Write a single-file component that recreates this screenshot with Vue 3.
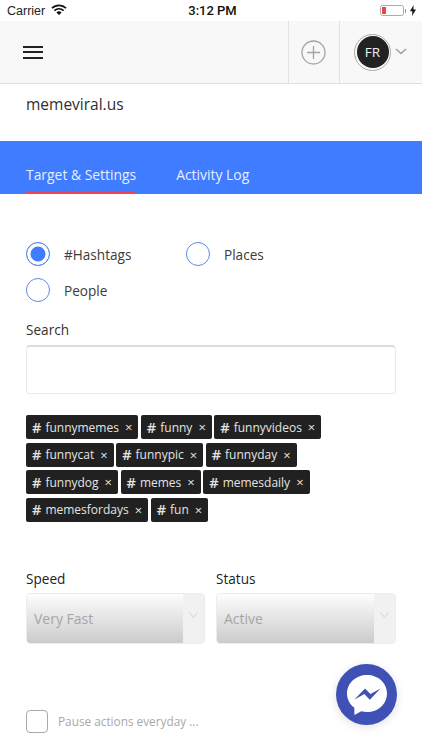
<script setup>
const tagRows = [
  ['funnymemes', 'funny', 'funnyvideos'],
  ['funnycat', 'funnypic', 'funnyday'],
  ['funnydog', 'memes', 'memesdaily'],
  ['memesfordays', 'fun'],
]
</script>

<template>
  <div class="page">
    <!-- status bar -->
    <div class="status">
      <div class="status-left">
        <span>Carrier</span>
        <svg width="16" height="12" viewBox="0 0 16 12" class="wifi">
          <path d="M1 4.2a10 10 0 0 1 14 0" fill="none" stroke="#111" stroke-width="1.7" />
          <path d="M3.4 6.6a6.6 6.6 0 0 1 9.2 0" fill="none" stroke="#111" stroke-width="1.7" />
          <path d="M5.4 8.4a3.8 3.8 0 0 1 5.2 0L8 11z" fill="#111" />
        </svg>
      </div>
      <span class="clock">3:12 PM</span>
      <div class="status-right">
        <div class="battery"><div class="battery-fill" /></div>
        <div class="battery-nub" />
        <svg width="6" height="11" viewBox="0 0 6 11" class="bolt">
          <path d="M3.6 0 0 6.2h2.4L2 11l4-6.6H3.4z" fill="#111" />
        </svg>
      </div>
    </div>

    <!-- header -->
    <header class="topbar">
      <button class="burger" aria-label="Menu"><span /><span /><span /></button>
      <div class="cell cell-add">
        <svg width="25" height="25" viewBox="0 0 25 25">
          <circle cx="12.500" cy="12.500" r="11.500" fill="none" stroke="#a3a3a3" stroke-width="1.3" />
          <path d="M12.500 6v13M6 12.500h13" fill="none" stroke="#a3a3a3" stroke-width="1.3" />
        </svg>
      </div>
      <div class="cell cell-user">
        <div class="avatar"><span>FR</span></div>
        <svg width="12" height="7" viewBox="0 0 12 7" class="caret">
          <path d="M1 1l5 4.600L11 1" fill="none" stroke="#9b9b9b" stroke-width="1.4" />
        </svg>
      </div>
    </header>

    <div class="account">memeviral.us</div>

    <!-- tabs -->
    <nav class="tabs">
      <span class="tab active">Target &amp; Settings</span>
      <span class="tab">Activity Log</span>
    </nav>

    <main class="content">
      <div class="radios">
        <label class="radio"><i class="dot on" />#Hashtags</label>
        <label class="radio"><i class="dot" />Places</label>
        <label class="radio"><i class="dot" />People</label>
      </div>

      <div class="field-label search-label">Search</div>
      <div class="search-box" />

      <div class="chips">
        <div v-for="(row, i) in tagRows" :key="i" class="chip-row">
          <span v-for="t in row" :key="t" class="chip">
            <b>#</b>{{ t }}<em>×</em>
          </span>
        </div>
      </div>

      <div class="selects">
        <div class="select-col">
          <div class="field-label">Speed</div>
          <div class="select">
            <div class="select-value">Very Fast</div>
            <div class="select-arrow">
              <svg width="9" height="6" viewBox="0 0 9 6"><path d="M.5.5l4 5 4-5" fill="none" stroke="#d4d4d4" /></svg>
            </div>
          </div>
        </div>
        <div class="select-col">
          <div class="field-label">Status</div>
          <div class="select">
            <div class="select-value">Active</div>
            <div class="select-arrow">
              <svg width="9" height="6" viewBox="0 0 9 6"><path d="M.5.5l4 5 4-5" fill="none" stroke="#d4d4d4" /></svg>
            </div>
          </div>
        </div>
      </div>

      <label class="pause"><i class="check" />Pause actions everyday ...</label>
    </main>

    <!-- messenger button -->
    <button class="fab" aria-label="Messenger">
      <svg width="42" height="42" viewBox="0 0 42 42">
        <path d="M21 1C9.900 1 1 9.200 1 19.400c0 5.800 2.900 11 7.400 14.400V41l6.800-3.700c1.800.5 3.800.8 5.800.8 11.100 0 20-8.200 20-18.700S32.100 1 21 1z" fill="#fff" />
        <path d="M8.500 25.500 19 14.500l5.500 5.500 10-5.500L23.800 25.700l-5.400-5.600z" fill="#3f51b5" />
      </svg>
    </button>
  </div>
</template>

<style scoped>
.page {
  position: relative;
  width: 422px;
  height: 750px;
  overflow: hidden;
  background: #fff;
  color: #333;
  font-family: "Open Sans", "Noto Sans", Arial, sans-serif;
}
.status {
  height: 21px;
  padding: 0 6px 0 7px;
  display: flex;
  align-items: center;
  justify-content: space-between;
  font-family: "Liberation Sans", Arial, sans-serif;
  font-size: 12.5px;
  color: #222;
}
.status-left { display: flex; align-items: center; gap: 6px; width: 122px; }
.wifi { margin-top: -1px; }
.clock { font-family: Roboto, Arial, sans-serif; font-size: 13px; font-weight: 500; color: #111; }
.status-right { display: flex; align-items: center; justify-content: flex-end; width: 120px; }
.battery {
  width: 24px;
  height: 11px;
  box-sizing: border-box;
  border: 1px solid #aaa;
  border-radius: 2.5px;
  padding: 1px;
}
.battery-fill { width: 4px; height: 100%; background: #f0453a; }
.battery-nub { width: 1px; height: 4px; background: #999; margin-left: 1px; margin-right: 4px; }

.topbar {
  height: 63px;
  box-sizing: border-box;
  display: flex;
  align-items: stretch;
  background: #f8f8f8;
  border-bottom: 1px solid #dedede;
}
.burger {
  margin: 0 auto 0 23px;
  padding: 0;
  border: 0;
  background: none;
  width: 20px;
  display: flex;
  flex-direction: column;
  justify-content: center;
  gap: 3.5px;
}
.burger span { display: block; height: 2px; background: #222; }
.cell {
  display: flex;
  align-items: center;
  border-left: 1px solid #e2e2e2;
}
.cell-add { width: 51px; box-sizing: border-box; justify-content: center; padding-right: 2px; }
.cell-user { width: 83px; box-sizing: border-box; padding-left: 14px; gap: 4px; }
.avatar {
  width: 37px;
  height: 37px;
  box-sizing: border-box;
  border: 1px solid #aaa;
  border-radius: 50%;
  padding: 1.5px;
}
.avatar span {
  display: flex;
  align-items: center;
  justify-content: center;
  width: 100%;
  height: 100%;
  border-radius: 50%;
  background: #222;
  color: #eee;
  font-size: 13.5px;
}
.caret { margin-top: -1px; }

.account {
  height: 57px;
  box-sizing: border-box;
  padding: 8px 0 0 26px;
  font-size: 15.5px;
  line-height: 24px;
  color: #2f2f2f;
}
.tabs {
  height: 53px;
  box-sizing: border-box;
  padding: 0 26px;
  display: flex;
  gap: 40px;
  background: #3f7cff;
}
.tab {
  height: 53px;
  box-sizing: border-box;
  padding-top: 23px;
  font-size: 13.9px;
  line-height: 22px;
  color: #e8effd;
}
.tab.active { border-bottom: 3px solid #ee4353; }

.content { padding: 48px 26px 0; }
.radios {
  display: grid;
  grid-template-columns: 160px 1fr;
  row-gap: 12px;
}
.radio {
  display: flex;
  align-items: center;
  gap: 14px;
  height: 24px;
  font-size: 13.6px;
  color: #3b3b3b;
}
.dot {
  width: 24px;
  height: 24px;
  box-sizing: border-box;
  border: 1px solid #5a8de8;
  border-radius: 50%;
  display: block;
}
.dot.on { background: #3f7cff; box-shadow: inset 0 0 0 3.5px #fff; }

.field-label { font-size: 13.6px; line-height: 20px; color: #333; }
.search-label { margin-top: 18px; }
.search-box {
  margin-top: 5px;
  height: 49px;
  box-sizing: border-box;
  border: 1px solid #eaeaea;
  border-top: 2px solid #dcdcdc;
  border-radius: 4px;
}
.chips {
  margin-top: 21px;
  display: flex;
  flex-direction: column;
  gap: 3.5px;
}
.chip-row { display: flex; gap: 2.5px; }
.chip {
  height: 24px;
  box-sizing: border-box;
  display: flex;
  align-items: center;
  padding: 0 6px;
  background: #212121;
  border-radius: 2px;
  color: #e4e4e4;
  font-size: 12px;
  white-space: nowrap;
}
.chip b { font-size: 14.5px; font-weight: 600; margin-right: 4px; }
.chip em { font-style: normal; font-size: 13px; margin-left: 6px; }

.selects {
  margin-top: 47px;
  display: grid;
  grid-template-columns: 179px 180px;
  column-gap: 11px;
}
.select-col .field-label { margin-bottom: 4px; color: #222; }
.select {
  height: 51px;
  display: flex;
  border-radius: 4px;
  overflow: hidden;
  border: 1px solid #ececec;
  box-sizing: border-box;
}
.select-value {
  flex: 1;
  padding: 14px 0 0 7px;
  font-size: 14px;
  line-height: 22px;
  color: #a6a6a6;
  background: linear-gradient(#fdfdfd, #cbcbcb);
}
.select-arrow {
  width: 21px;
  padding-top: 18px;
  background: #f1f1f1;
  box-sizing: border-box;
}
.select-arrow svg { display: block; margin: 0 auto; }
.pause {
  margin-top: 66px;
  display: flex;
  align-items: center;
  gap: 10px;
  font-size: 11.8px;
  color: #a8a8a8;
}
.check {
  display: block;
  width: 22px;
  height: 23px;
  box-sizing: border-box;
  border: 1px solid #a9a9a9;
  border-radius: 4px;
}
.fab {
  position: absolute;
  left: 336px;
  top: 664px;
  width: 61px;
  height: 61px;
  padding: 0;
  border: 0;
  border-radius: 50%;
  background: #3f51b5;
  display: flex;
  align-items: center;
  justify-content: center;
  box-shadow: 0 2px 10px rgba(0, 0, 0, 0.12);
}
.fab svg { margin-top: 1px; }
</style>

<style>
body { margin: 0; }
</style>
